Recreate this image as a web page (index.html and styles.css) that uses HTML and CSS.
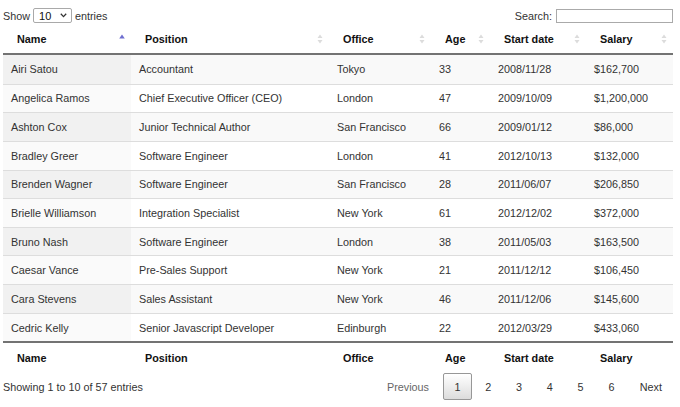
FILE: index.html
```html
<!DOCTYPE html>
<html lang="en">
<head>
<meta charset="utf-8">
<title>Employees</title>
<link rel="stylesheet" href="styles.css">
</head>
<body>
<div class="wrapper">
  <div class="top">
    <label class="length">Show <span class="select">10 <svg class="chev" width="7" height="5" viewBox="0 0 7 5"><path d="M0.8 0.8 L3.5 3.6 L6.2 0.8" fill="none" stroke="#333" stroke-width="1.3"/></svg></span> entries</label>
    <label class="search">Search: <span class="input"></span></label>
  </div>
  <table class="dt">
    <colgroup>
      <col class="c1"><col class="c2"><col class="c3"><col class="c4"><col class="c5"><col class="c6">
    </colgroup>
    <thead>
      <tr>
        <th><div class="hin"><span>Name</span><svg class="si" width="6" height="10" viewBox="0 0 6 10"><path d="M3 0.5 L5.8 4.5 L0.2 4.5 Z" fill="#6f6fd0"/></svg></div></th>
        <th><div class="hin"><span>Position</span><svg class="si" width="6" height="10" viewBox="0 0 6 10"><path d="M3 0.5 L5.5 4 L0.5 4 Z M0.5 6 L5.5 6 L3 9.5 Z" fill="#dcdcdc"/></svg></div></th>
        <th><div class="hin"><span>Office</span><svg class="si" width="6" height="10" viewBox="0 0 6 10"><path d="M3 0.5 L5.5 4 L0.5 4 Z M0.5 6 L5.5 6 L3 9.5 Z" fill="#dcdcdc"/></svg></div></th>
        <th><div class="hin"><span>Age</span><svg class="si" width="6" height="10" viewBox="0 0 6 10"><path d="M3 0.5 L5.5 4 L0.5 4 Z M0.5 6 L5.5 6 L3 9.5 Z" fill="#dcdcdc"/></svg></div></th>
        <th><div class="hin"><span>Start date</span><svg class="si" width="6" height="10" viewBox="0 0 6 10"><path d="M3 0.5 L5.5 4 L0.5 4 Z M0.5 6 L5.5 6 L3 9.5 Z" fill="#dcdcdc"/></svg></div></th>
        <th><div class="hin"><span>Salary</span><svg class="si" width="6" height="10" viewBox="0 0 6 10"><path d="M3 0.5 L5.5 4 L0.5 4 Z M0.5 6 L5.5 6 L3 9.5 Z" fill="#dcdcdc"/></svg></div></th>
      </tr>
    </thead>
    <tbody>
      <tr class="odd"><td class="sorted">Airi Satou</td><td>Accountant</td><td>Tokyo</td><td>33</td><td>2008/11/28</td><td>$162,700</td></tr>
      <tr class="even"><td class="sorted">Angelica Ramos</td><td>Chief Executive Officer (CEO)</td><td>London</td><td>47</td><td>2009/10/09</td><td>$1,200,000</td></tr>
      <tr class="odd"><td class="sorted">Ashton Cox</td><td>Junior Technical Author</td><td>San Francisco</td><td>66</td><td>2009/01/12</td><td>$86,000</td></tr>
      <tr class="even"><td class="sorted">Bradley Greer</td><td>Software Engineer</td><td>London</td><td>41</td><td>2012/10/13</td><td>$132,000</td></tr>
      <tr class="odd"><td class="sorted">Brenden Wagner</td><td>Software Engineer</td><td>San Francisco</td><td>28</td><td>2011/06/07</td><td>$206,850</td></tr>
      <tr class="even"><td class="sorted">Brielle Williamson</td><td>Integration Specialist</td><td>New York</td><td>61</td><td>2012/12/02</td><td>$372,000</td></tr>
      <tr class="odd"><td class="sorted">Bruno Nash</td><td>Software Engineer</td><td>London</td><td>38</td><td>2011/05/03</td><td>$163,500</td></tr>
      <tr class="even"><td class="sorted">Caesar Vance</td><td>Pre-Sales Support</td><td>New York</td><td>21</td><td>2011/12/12</td><td>$106,450</td></tr>
      <tr class="odd"><td class="sorted">Cara Stevens</td><td>Sales Assistant</td><td>New York</td><td>46</td><td>2011/12/06</td><td>$145,600</td></tr>
      <tr class="even"><td class="sorted">Cedric Kelly</td><td>Senior Javascript Developer</td><td>Edinburgh</td><td>22</td><td>2012/03/29</td><td>$433,060</td></tr>
    </tbody>
    <tfoot>
      <tr><th>Name</th><th>Position</th><th>Office</th><th>Age</th><th>Start date</th><th>Salary</th></tr>
    </tfoot>
  </table>
  <div class="bottom">
    <div class="info">Showing 1 to 10 of 57 entries</div>
    <div class="paginate">
      <span class="pbtn edge disabled">Previous</span>
      <span class="pbtn num current">1</span>
      <span class="pbtn num">2</span>
      <span class="pbtn num">3</span>
      <span class="pbtn num">4</span>
      <span class="pbtn num">5</span>
      <span class="pbtn num">6</span>
      <span class="pbtn edge">Next</span>
    </div>
  </div>
</div>
</body>
</html>
```

FILE: styles.css
```css
html, body {
  margin: 0;
  padding: 0;
  background: #fff;
}
body {
  font-family: "Liberation Sans", Arial, sans-serif;
  font-size: 10.8px;
  color: #333;
}
.wrapper {
  width: 670px;
  padding-left: 3px;
}
.top {
  display: flex;
  justify-content: space-between;
  align-items: center;
  height: 17px;
  padding-top: 7px;
}
.length, .search {
  display: flex;
  align-items: center;
  gap: 3px;
  color: #333;
}
.select {
  display: inline-flex;
  align-items: center;
  justify-content: space-between;
  box-sizing: border-box;
  width: 39px;
  height: 15px;
  border: 1px solid #a9a9a9;
  border-radius: 2px;
  padding: 0 4px 0 5px;
  color: #111;
  font-size: 11px;
  background: #fff;
}
.search {
  gap: 4px;
}
.input {
  display: inline-block;
  box-sizing: border-box;
  width: 117px;
  height: 14px;
  border: 1px solid #aaa;
  background: #fff;
}
.dt {
  width: 670px;
  table-layout: fixed;
  border-collapse: separate;
  border-spacing: 0;
}
.c1 { width: 128px; }
.c2 { width: 198px; }
.c3 { width: 102px; }
.c4 { width: 59px; }
.c5 { width: 96px; }
.c6 { width: 87px; }
.dt thead th {
  height: 31px;
  padding: 0 6px 0 14px;
  border-bottom: 2px solid #737373;
  text-align: left;
  font-weight: bold;
  color: #111;
  box-sizing: border-box;
}
.hin {
  display: flex;
  justify-content: space-between;
  align-items: center;
}
.si {
  display: block;
  flex: none;
}
.dt tbody td {
  height: 28.65px;
  padding: 0 8px;
  box-sizing: border-box;
  border-top: 1px solid #ddd;
  white-space: nowrap;
  overflow: hidden;
  color: #333;
}
.dt tbody tr:first-child td {
  border-top: none;
}
.dt tbody tr.odd td { background: #f9f9f9; }
.dt tbody tr.odd td.sorted { background: #f1f1f1; }
.dt tbody tr.even td { background: #fff; }
.dt tbody tr.even td.sorted { background: #fafafa; }
.dt tfoot th {
  height: 31px;
  padding: 0 6px 0 14px;
  border-top: 2px solid #737373;
  text-align: left;
  font-weight: bold;
  color: #111;
  box-sizing: border-box;
}
.bottom {
  display: flex;
  justify-content: space-between;
  align-items: center;
  height: 27px;
  margin-top: 1px;
}
.info {
  color: #333;
}
.paginate {
  display: flex;
  align-items: center;
  margin-right: -1px;
}
.pbtn {
  display: flex;
  align-items: center;
  justify-content: center;
  box-sizing: border-box;
  height: 27px;
  margin-left: 2px;
  color: #333;
  border: 1px solid transparent;
  border-radius: 2px;
}
.pbtn.num {
  width: 28.8px;
}
.pbtn.edge {
  padding: 0 11px;
}
.pbtn.disabled {
  color: #666;
}
.pbtn.current {
  border-color: #979797;
  background: linear-gradient(to bottom, #ffffff 0%, #dcdcdc 100%);
  color: #333;
}
```
